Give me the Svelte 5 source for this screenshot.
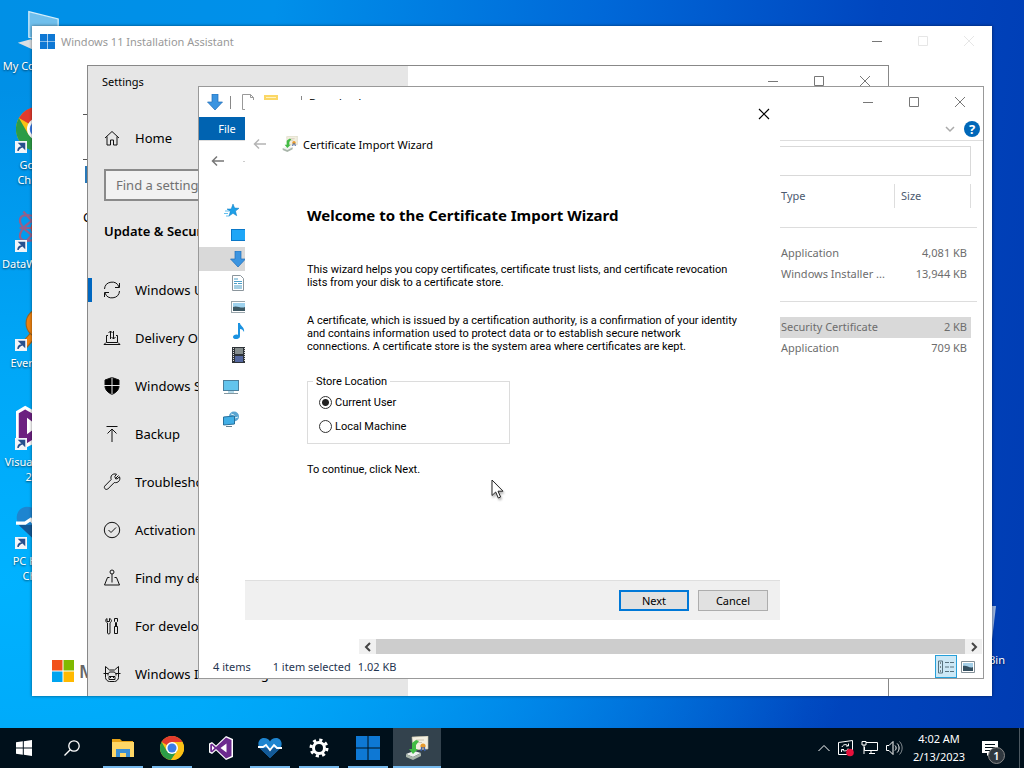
<script>
	let store = $state('user');
	let search = $state('');

	const shortcuts = [
		{ icon: 'computer', label: 'My Computer', link: false },
		{ icon: 'chrome', label: 'Google Chrome', link: true },
		{ icon: 'data', label: 'DataWrangler', link: true },
		{ icon: 'search', label: 'Everything', link: true },
		{ icon: 'installer', label: 'Visual Studio 2022', link: true },
		{ icon: 'health', label: 'PC Health Check', link: true }
	];

	const settings = [
		{ icon: 'sync', label: 'Windows Update', active: true },
		{ icon: 'delivery', label: 'Delivery Optimization' },
		{ icon: 'shield', label: 'Windows Security' },
		{ icon: 'backup', label: 'Backup' },
		{ icon: 'wrench', label: 'Troubleshoot' },
		{ icon: 'check', label: 'Activation' },
		{ icon: 'find', label: 'Find my device' },
		{ icon: 'tools', label: 'For developers' },
		{ icon: 'insider', label: 'Windows Insider Program' }
	];

	const places = ['star', 'desktop', 'download', 'document', 'picture', 'music', 'video'];

	const groups = [
		[
			{ type: 'Application', size: '4,081 KB' },
			{ type: 'Windows Installer ...', size: '13,944 KB' }
		],
		[
			{ type: 'Security Certificate', size: '2 KB', selected: true },
			{ type: 'Application', size: '709 KB' }
		]
	];

	const apps = [
		{ icon: 'folder', name: 'File Explorer', open: true },
		{ icon: 'chrome', name: 'Google Chrome', open: true },
		{ icon: 'studio', name: 'Visual Studio', open: false },
		{ icon: 'health', name: 'PC Health Check', open: true },
		{ icon: 'gear', name: 'Settings', open: true },
		{ icon: 'windows', name: 'Installation Assistant', open: true },
		{ icon: 'cert', name: 'Certificate Import Wizard', open: true, active: true }
	];
</script>

{#snippet controls(kind)}
	<div class="controls {kind}">
		<button aria-label="Minimize"><svg width="10" height="10"><path d="M0 5.5H10" /></svg></button>
		<button aria-label="Maximize"><svg width="10" height="10"><path d="M.5 .5H9.5V9.5H.5Z" /></svg></button>
		<button aria-label="Close"><svg width="10" height="10"><path d="M0 0L10 10M10 0L0 10" /></svg></button>
	</div>
{/snippet}

{#snippet appIcon(name, size)}
	<svg class="app-icon" width={size} height={size} viewBox="0 0 24 24" aria-hidden="true">
		{#if name === 'folder'}
			<path d="M1 3h8l2 2h11v3H1z" fill="#e8a317" />
			<path d="M1 6h22v15H1z" fill="#ffd766" />
			<path d="M5 21v-8h14v8h-4v-4H9v4z" fill="#3b8fd4" />
		{:else if name === 'chrome'}
			<circle cx="12" cy="12" r="12" fill="#fbc116" />
			<path d="M12 12L1.6 6A12 12 0 0 1 22.4 6H12z" fill="#e33b2e" />
			<path d="M1.6 6A12 12 0 0 0 11 24l6.2-9L12 12 6.800 15z" fill="#2c9c47" />
			<path d="M12 6h10.400A12 12 0 0 1 11 24l6.200-9z" fill="#fbc116" />
			<circle cx="12" cy="12" r="6" fill="#fff" />
			<circle cx="12" cy="12" r="4.500" fill="#3a7de8" />
		{:else if name === 'studio'}
			<path d="M17 0l7 3v18l-7 3L7 14.500 3 18l-3-1.500v-9L3 6l4 3.500z" fill="#fff" />
			<path d="M17 1.500l5.500 2.500v16L17 22.500 7 13l-4 3.500-1.800-1V8.500L3 7.500l4 3.500zM17.500 7.500L11.500 12l6 4.500zM3 9.500v5L5.500 12z" fill="#6c2a8e" fill-rule="evenodd" />
		{:else if name === 'installer'}
			<path d="M0 4L5 1l18 10v4L5 24l-5-3z" fill="#fff" />
			<path d="M1.500 5L5 3l16 9-16 10-3.500-2z" fill="#6c2180" />
			<path d="M6 7.500l6 4.500-6 4.500z" fill="#fff" />
		{:else if name === 'health'}
			<path d="M12 22L2 12.500C-1.500 8 1 2 6 2c3 0 5 1.500 6 3.500C13 3.500 15 2 18 2c5 0 7.500 6 4 10.500z" fill="#1e85d0" />
			<path d="M1.500 12h21L12 22z" fill="#135a98" />
			<path d="M0 11h5l3-2 4 5 4-5 3 3h5" fill="none" stroke="#fff" stroke-width="1.800" />
		{:else if name === 'gear'}
			<circle cx="12" cy="12" r="5.500" fill="none" stroke="#fff" stroke-width="3" />
			<circle cx="12" cy="12" r="8" fill="none" stroke="#fff" stroke-width="3" stroke-dasharray="3.100 3.180" />
		{:else if name === 'windows'}
			<path d="M0 0h11.500v11.500H0zM12.500 0H24v11.500H12.500zM0 12.500h11.500V24H0zM12.500 12.500H24V24H12.500z" fill="#0e78d4" />
		{:else if name === 'cert'}
			<path d="M7 1l16-1v13l-15 1z" fill="#f3efe0" stroke="#c5bfa5" stroke-width=".6" />
			<path d="M11 4h8M11 6.500h6" stroke="#ccc5b0" />
			<circle cx="18" cy="10" r="2.600" fill="#e89b2c" />
			<path d="M17 11l-1 4M19 11l1 4" stroke="#3f63ad" stroke-width="1.500" />
			<path d="M1 18l8-3 7 2-8 4z" fill="#f0f2f0" />
			<path d="M1 18l7 3v3l-7-3zM8 21l8-4v3l-8 4z" fill="#a9b5aa" />
			<path d="M11 4L7 7v6H4l4 5 5-5h-2V9l3-4z" fill="#42bb45" />
		{:else if name === 'computer'}
			<path d="M7 2l16 4v13L7 16z" fill="#70bfec" stroke="#d4eefb" stroke-width=".7" />
			<path d="M1 19l7-2 9 3-7 3z" fill="#d9dfe3" />
		{:else if name === 'data'}
			<g fill="none" stroke="#95608a" stroke-width="1.200">
				<ellipse cx="12" cy="12" rx="11" ry="5" transform="rotate(30 12 12)" />
				<ellipse cx="12" cy="12" rx="11" ry="5" transform="rotate(-30 12 12)" />
				<path d="M4 3l16 18M4 21L20 3M2 12h20" />
			</g>
			<circle cx="12" cy="12" r="4" fill="#bd5658" />
		{:else if name === 'search'}
			<path d="M3 21l6-7 3 2-6 7z" fill="#ee8210" stroke="#9b6420" stroke-width=".6" />
			<circle cx="13.500" cy="10" r="8" fill="#ee8210" stroke="#9b6420" stroke-width=".6" />
			<circle cx="14" cy="10" r="4" fill="#fff" />
		{/if}
	</svg>
{/snippet}

{#snippet lineIcon(name)}
	<svg class="line-icon" width="18" height="18" viewBox="0 0 18 18" aria-hidden="true">
		{#if name === 'home'}
			<path d="M2 9l7-6.500L16 9M4 7.500V16h3.500v-5h3v5H14V7.500" />
		{:else if name === 'sync'}
			<path d="M1.500 8A7.500 7.500 0 0 1 16 6M16.500 10A7.500 7.500 0 0 1 2 12M16.500 2v4.500H12M1.500 16v-4.500H6" />
		{:else if name === 'delivery'}
			<path d="M5 6.500H3.500v7h11v-7H13M3 13.500L1 15.500h16l-2-2M7.500 10V2M5.500 4l2-2 2 2M10.500 2v8M8.500 8l2 2 2-2" />
		{:else if name === 'shield'}
			<path class="solid" d="M9 .5l7 2.500v6c0 4-3 6.500-7 8.500-4-2-7-4.500-7-8.500V3z" />
			<path class="cut" d="M9 .5v17M1 8.500h16" />
		{:else if name === 'backup'}
			<path d="M3.500 1.500h11M9 17V4M4.500 8.500L9 4l4.500 4.500" />
		{:else if name === 'wrench'}
			<path d="M15.500 2.500L12.500 5.500 11.800 3.500 13.500 1.200C9.500 0 7 3 8.200 6.500L1.800 13c-1.500 2 1 4.500 3 3l6.500-6.500C15 10.500 18 7 16.500 3.800L14 6l-2-.500" />
		{:else if name === 'check'}
			<circle cx="9" cy="9" r="7.700" />
			<path d="M5.500 9l2.500 2.500L13 6.500" />
		{:else if name === 'find'}
			<circle cx="9" cy="3" r="2" />
			<path d="M9 5v8.500M6.500 8.500H4.500l-3 7.500h15l-3-7.500H11.500" />
		{:else if name === 'tools'}
			<path d="M4 1.500v3h2.500v-3M6.500 1.500c3 1 2 3.500.500 4.500v10c0 1.300-2.500 1.300-2.500 0V6C2.500 5 2 2.500 4 1.500M11.500 1.500h3v3l-1 1v4h-1v-4l-1-1zM11.500 9.500h3v7h-3z" />
		{:else}
			<path d="M2.500 1.500v11c0 2 2 4 4 4h5c2 0 4-2 4-4v-11L11.500 5h-5zM.5 8.500h5l1-1.500h5l1 1.500h5M6 11.500h6v3H6zM5 8.500v2M13 8.500v2M7.500 12v1M10.500 12v1" />
		{/if}
	</svg>
{/snippet}

{#snippet placeIcon(name)}
	<svg width="16" height="16" viewBox="0 0 16 16" aria-hidden="true">
		{#if name === 'star'}
			<path d="M9 1l1.600 4 4.400.300-3.500 2.800 1.200 4.600L9 10.300l-4 2.800L6.300 8.500 3 6h4.200z" fill="#1da0e8" stroke="#0878c0" stroke-width=".5" />
			<path d="M1 8h4M0 10.500h4M2 13h3" stroke="#64c0ef" />
		{:else if name === 'desktop'}
			<rect x="1.500" y="2.500" width="15" height="11" fill="#1ea6f7" stroke="#0a78c8" />
		{:else if name === 'download'}
			<path d="M5 0h6v8h4.500L8 16 .5 8H5z" fill="#3b94e0" stroke="#1f6db8" stroke-width=".7" />
		{:else if name === 'document'}
			<path d="M2.500 .5h8l3 3v12h-11z" fill="#fff" stroke="#8b959c" />
			<path d="M4 4h4M4 6.500h8M4 8.500h3M8 8.500h4M4 11h8M4 13h8" stroke="#4d9fc8" />
		{:else if name === 'picture'}
			<rect x="1.500" y="2.500" width="15" height="11" fill="#fff" stroke="#9aa6ac" />
			<path d="M3 4h12v8H3z" fill="#9ed2ee" />
			<path d="M3 8c4-2 8 2 12 0v4H3z" fill="#3e5964" />
		{:else if name === 'music'}
			<path d="M8 0h2c0 3 5 4 4 9-1-2-2-3-4-3v7c0 4-7 4-7 1 0-2 3-3 5-2z" fill="#1b92e0" />
		{:else if name === 'video'}
			<rect x="2" y="0" width="14" height="16" fill="#2e3338" />
			<path d="M5 1h8v6H5z" fill="#868e8e" />
			<path d="M5 9h8v6H5z" fill="#55689f" />
			<path d="M3.500 1v14M14.500 1v14" stroke="#ddd" stroke-dasharray="1 1" />
		{:else if name === 'pc'}
			<rect x=".5" y="1.500" width="15" height="10" fill="#62c4ed" stroke="#4b7f9c" />
			<path d="M1 14.500h14" stroke="#8397a0" />
			<path d="M5 13h6" stroke="#67b4d4" />
		{:else}
			<circle cx="11" cy="5.500" r="5" fill="#5aa5d2" />
			<path d="M8 3l3 1 1 3 3-1" stroke="#d7eef6" fill="none" />
			<path d="M.5 6l11-1v8l-11 1z" fill="#42afe6" stroke="#28709c" />
			<path d="M3 15.500h6" stroke="#69818e" />
		{/if}
	</svg>
{/snippet}

<div class="page">
	<main class="desktop">
		<div class="shortcuts">
			{#each shortcuts as item}
				<a class="shortcut" href="#desktop">
					<span class="picture">
						{@render appIcon(item.icon, 44)}
						{#if item.link}
							<svg class="link-badge" width="12" height="12">
								<path d="M0 0h12v12H0z" fill="#f2f5f9" />
								<path d="M3 10c0-3 1-4 4-4M4.500 2.500H9.500V7.500z" fill="#27508e" stroke="#27508e" stroke-width="1.500" />
							</svg>
						{/if}
					</span>
					{item.label}
				</a>
			{/each}
		</div>
		<a class="shortcut recycle" href="#bin">
			<svg width="44" height="50" viewBox="0 0 44 50"><path d="M2 4h40l-5 42H7z" fill="#dbe5ee" opacity=".7" /></svg>
			Recycle Bin
		</a>

		<section class="window assistant">
			<header class="titlebar">
				{@render appIcon('windows', 15)}
				<h2>Windows 11 Installation Assistant</h2>
				{@render controls('faded')}
			</header>
			<div class="assistant-body">
				<span class="bar"></span>
				<span class="bar"></span>
				<span class="tile"></span>
				<p>Checking</p>
			</div>
			<footer>
				<svg width="22" height="22">
					<path d="M0 0h10.500v10.500H0z" fill="#f1511b" />
					<path d="M11.500 0H22v10.500H11.500z" fill="#80b900" />
					<path d="M0 11.500h10.500V22H0z" fill="#00a4ef" />
					<path d="M11.500 11.500H22V22H11.500z" fill="#ffb900" />
				</svg>
				<span>Microsoft</span>
			</footer>
		</section>

		<section class="window settings">
			<aside>
				<h2>Settings</h2>
				<nav>
					<a class="entry" href="#home">{@render lineIcon('home')}Home</a>
					<input type="text" placeholder="Find a setting" aria-label="Find a setting" bind:value={search} />
					<h3>Update &amp; Security</h3>
					{#each settings as item}
						<a class="entry" class:active={item.active} href="#{item.icon}">
							{@render lineIcon(item.icon)}{item.label}
						</a>
					{/each}
				</nav>
			</aside>
			<div class="settings-main">{@render controls('grey')}</div>
		</section>

		<section class="window explorer">
			<header class="titlebar">
				{@render placeIcon('download')}
				<span class="divider"></span>
				<svg width="12" height="16"><path d="M.5 .5h8l3 3v12H.500zM8.500 .5v3h3" fill="#fff" stroke="#999" /></svg>
				<svg class="folder" width="14" height="16"><path d="M0 1h14v14H0z" fill="#fbd765" /><path d="M2 3h10v1H2z" fill="#fff3bf" /></svg>
				<span class="divider second"></span>
				<h2>Downloads</h2>
				{@render controls('grey')}
			</header>
			<div class="ribbon">
				<button class="file">File</button>
				<svg class="expand" width="10" height="10"><path d="M1 3l4 4 4-4" fill="none" stroke="#aaa" stroke-width="1.500" /></svg>
				<button class="help" aria-label="Help">?</button>
			</div>
			<div class="address">
				<svg width="14" height="12"><path d="M13 6H1.500M6 1.500L1.500 6 6 10.500" fill="none" stroke="#777" stroke-width="1.500" /></svg>
				<span class="dot"></span>
				<input type="text" aria-label="Search Downloads" />
			</div>
			<div class="explorer-body">
				<nav class="places">
					{#each places as place}
						<a
							href="#{place}"
							aria-label={place}
							class:quick={place === 'star'}
							class:selected={place === 'download'}>{@render placeIcon(place)}</a>
					{/each}
					<a class="root" href="#pc" aria-label="This PC">{@render placeIcon('pc')}</a>
					<a class="root" href="#network" aria-label="Network">{@render placeIcon('network')}</a>
				</nav>
				<div class="files">
					<table>
						<colgroup>
							<col />
							<col class="type" />
							<col class="size" />
							<col class="edge" />
						</colgroup>
						<thead>
							<tr><th></th><th><span>Type</span></th><th><span>Size</span></th><th></th></tr>
						</thead>
						{#each groups as rows}
							<tbody>
								<tr class="group"><td colspan="4"><hr /></td></tr>
								{#each rows as row}
									<tr class:selected={row.selected}>
										<td></td>
										<td>{row.type}</td>
										<td class="number">{row.size}</td>
										<td></td>
									</tr>
								{/each}
							</tbody>
						{/each}
					</table>
					<div class="scrollbar">
						<button aria-label="Scroll left"><svg width="8" height="10"><path d="M6 1L2 5l4 4" /></svg></button>
						<span class="thumb"></span>
						<button aria-label="Scroll right"><svg width="8" height="10"><path d="M2 1l4 4-4 4" /></svg></button>
					</div>
				</div>
			</div>
			<footer class="status">
				<span class="count">4 items</span>
				<span class="picked">1 item selected</span>
				<span>1.02 KB</span>
				<button class="view on" aria-label="Details">
					<svg width="16" height="14"><path d="M.5 1v12h4V1zM7 2.500h4M12 2.500h4M7 7h4M12 7h4M7 11.500h4M12 11.500h4" fill="none" stroke="#58727e" /><path d="M2 3h1M2 7h1M2 11h1" stroke="#222" /></svg>
				</button>
				<button class="view" aria-label="Large icons">
					<svg width="14" height="12"><path d="M.5 .5h13v11H.500z" fill="#fff" stroke="#839098" /><path d="M2 2h10v8H2z" fill="#a4cfe8" /><path d="M2 5c4-1 7 3 10 1v4H2z" fill="#344f60" /></svg>
				</button>
			</footer>
		</section>

		<section class="window wizard">
			<header>
				<button class="close" aria-label="Close"><svg width="12" height="12"><path d="M1 1l10 10M11 1L1 11" stroke="#000" stroke-width="1.200" /></svg></button>
				<div class="wizard-title">
					<button aria-label="Back"><svg width="14" height="12"><path d="M13 6H1.500M6 1.500L1.500 6 6 10.500" fill="none" stroke="#b4b4b4" stroke-width="1.500" /></svg></button>
					{@render appIcon('cert', 16)}
					<span>Certificate Import Wizard</span>
				</div>
			</header>
			<div class="wizard-body">
				<h1>Welcome to the Certificate Import Wizard</h1>
				<p>
					This wizard helps you copy certificates, certificate trust lists, and certificate revocation<br />
					lists from your disk to a certificate store.
				</p>
				<p>
					A certificate, which is issued by a certification authority, is a confirmation of your identity<br />
					and contains information used to protect data or to establish secure network<br />
					connections. A certificate store is the system area where certificates are kept.
				</p>
				<fieldset>
					<legend>Store Location</legend>
					<label><input type="radio" name="store" value="user" bind:group={store} />Current User</label>
					<label><input type="radio" name="store" value="machine" bind:group={store} />Local Machine</label>
				</fieldset>
				<p class="hint">To continue, click Next.</p>
			</div>
			<footer>
				<button class="default">Next</button>
				<button>Cancel</button>
			</footer>
		</section>

		<svg class="cursor" width="14" height="20" viewBox="0 0 14 20">
			<path d="M1 1v15.500l3.700-3.500 2.600 6 2.300-1-2.600-5.800H12z" fill="#fff" stroke="#222" />
		</svg>
	</main>

	<footer class="taskbar">
		<button class="start" aria-label="Start"><svg width="16" height="16"><path d="M0 2.300L6.800 1.300V7.500H0zM7.800 1.200L16 0v7.500H7.800zM0 8.500h6.800v6.200L0 13.700zM7.800 8.500H16V16l-8.200-1.200z" fill="#fff" /></svg></button>
		<button class="start" aria-label="Search"><svg width="16" height="16"><circle cx="10" cy="6" r="5.200" fill="none" stroke="#fff" stroke-width="1.300" /><path d="M6.200 9.800L.5 15.500" stroke="#fff" stroke-width="1.300" /></svg></button>
		<div class="apps">
			{#each apps as app}
				<button class:open={app.open} class:active={app.active} aria-label={app.name}>{@render appIcon(app.icon, 24)}</button>
			{/each}
		</div>
		<div class="tray">
			<svg width="14" height="8"><path d="M1.500 7L7 1.500 12.500 7" /></svg>
			<svg width="18" height="18">
				<path d="M1.500 3.500L15.500 1.500v14h-14zM5 8c1-3 5-3 6-1M11.500 4.500V7H9M11 9.500c-1 3-4.500 3-6 1M4.500 13v-2.500H7" />
				<circle class="alert" cx="13" cy="13.500" r="3.800" />
			</svg>
			<svg width="18" height="16"><path d="M5 2.500h11.500v8H3.500V7M8 13.500h6M10 10.500v3M1 1.500h4V5H1zM3 5v9" /></svg>
			<svg width="18" height="16"><path d="M1.500 5.500h2.500l4-4v13l-4-4H1.500zM10 5.500c1.500 1.500 1.500 3.500 0 5M12.200 3.500c2.500 2.500 2.500 6.500 0 9" /><path d="M14.500 1.500c3.500 3.500 3.500 9.500 0 13" opacity=".5" /></svg>
		</div>
		<time>4:02 AM<br />2/13/2023</time>
		<button class="notices" aria-label="Notifications">
			<svg width="16" height="15"><path d="M0 0h16v12H9l-4 3v-3H0z" fill="#fff" /><path d="M3 3.500h10M3 6.500h10M3 9.500h6" stroke="#001018" /></svg>
			<span class="badge">1</span>
		</button>
		<span class="peek"></span>
	</footer>
</div>

<style>
	:global(body) {
		font-family: 'Noto Sans', 'Open Sans', sans-serif;
		font-size: 11px;
	}

	.page {
		display: flex;
		flex-direction: column;
		min-height: 100vh;
		color: #000;
	}

	.page :is(h1, h2, h3, p) {
		margin: 0;
	}

	.page h2 {
		font-size: 11px;
		font-weight: 400;
	}

	a {
		color: inherit;
		text-decoration: none;
	}

	button {
		align-items: center;
		background: none;
		border: 0;
		color: inherit;
		display: flex;
		font: inherit;
		justify-content: center;
		padding: 0;
	}

	svg {
		display: block;
		flex: none;
	}

	.desktop {
		background:
			radial-gradient(ellipse at 0% 80%, #00b2ff 0%, rgb(0, 178, 255, 0.7) 25%, transparent 60%),
			linear-gradient(96deg, #0090e6 0%, #0090ea 25%, #0068d8 55%, #0046bf 80%, #003cb3 100%);
		flex: 1;
		overflow: hidden;
		position: relative;
	}

	.shortcuts {
		display: flex;
		flex-direction: column;
		width: 76px;
	}

	.shortcut {
		align-items: center;
		box-sizing: border-box;
		color: #fff;
		display: flex;
		flex-direction: column;
		height: 99px;
		line-height: 15px;
		padding-top: 8px;
		text-align: center;
		text-shadow: 0 1px 2px rgb(0, 0, 0, 0.6);
		width: 76px;
	}

	.picture {
		height: 50px;
		position: relative;
	}

	.link-badge {
		bottom: 4px;
		left: -1px;
		position: absolute;
	}

	.recycle {
		bottom: 35px;
		position: absolute;
		right: 10px;
	}

	.window {
		background: #fff;
		box-sizing: border-box;
		display: flex;
		flex-direction: column;
		overflow: hidden;
		position: absolute;
	}

	.titlebar {
		align-items: center;
		display: flex;
		height: 30px;
	}

	.controls {
		display: flex;
		margin-left: auto;
	}

	.controls button {
		height: 30px;
		width: 46px;
	}

	.controls path {
		fill: none;
		stroke: #777;
	}

	.controls.faded button:not(:first-child) path {
		stroke: #e6e6e6;
	}

	.assistant {
		bottom: 32px;
		box-shadow: 0 0 3px rgb(0, 0, 0, 0.5);
		left: 32px;
		right: 32px;
		top: 26px;
	}

	.assistant .titlebar {
		color: #999;
		gap: 6px;
		padding-left: 8px;
	}

	.assistant-body {
		display: flex;
		flex: 1;
		flex-direction: column;
		padding: 58px 0 0 51px;
	}

	.assistant-body p {
		font-size: 13px;
		line-height: 16px;
	}

	.bar {
		background: #555;
		height: 1px;
		margin-bottom: 44px;
		width: 20px;
	}

	.bar + .bar {
		margin-bottom: 6px;
	}

	.tile {
		background: #2878b8;
		height: 17px;
		margin: 0 2px 26px;
		width: 60px;
	}

	.assistant footer {
		align-items: center;
		color: #666;
		display: flex;
		font-size: 18px;
		font-weight: 600;
		gap: 5px;
		height: 50px;
		padding-left: 20px;
	}

	.settings {
		border: 1px solid #888;
		border-bottom: 0;
		bottom: 32px;
		flex-direction: row;
		left: 87px;
		right: 135px;
		top: 65px;
	}

	.settings aside {
		background: #e6e6e6;
		flex: none;
		width: 320px;
	}

	.settings h2 {
		height: 48px;
		line-height: 32px;
		padding-left: 14px;
	}

	.settings-main {
		align-items: flex-start;
		display: flex;
		flex: 1;
	}

	.entry {
		align-items: center;
		display: flex;
		font-size: 13px;
		gap: 14px;
		height: 48px;
		padding-left: 15px;
		position: relative;
	}

	.entry.active::before {
		background: #0067c0;
		content: '';
		height: 24px;
		left: 0;
		position: absolute;
		width: 4px;
	}

	.line-icon {
		fill: none;
		stroke: #111;
	}

	.solid {
		fill: #000;
	}

	.cut {
		stroke: #e6e6e6;
	}

	.settings input {
		background: #f2f2f2;
		border: 2px solid #8a8a8a;
		box-sizing: border-box;
		display: block;
		font: inherit;
		font-size: 13px;
		height: 32px;
		margin: 7px 0 0 16px;
		padding: 0 10px;
		width: 272px;
	}

	.settings input::placeholder {
		color: #717171;
	}

	.settings h3 {
		font-size: 13px;
		font-weight: 600;
		height: 65px;
		line-height: 60px;
		padding-left: 16px;
	}

	.explorer {
		border: 1px solid #999;
		bottom: 49px;
		left: 198px;
		right: 40px;
		top: 86px;
	}

	.explorer .titlebar {
		padding-left: 8px;
	}

	.divider {
		background: #888;
		height: 13px;
		margin: 0 11px 0 7px;
		width: 1px;
	}

	.folder {
		margin-left: 10px;
	}

	.divider.second {
		margin: 0 7px 0 23px;
	}

	.ribbon {
		align-items: center;
		border-bottom: 1px solid #ddd;
		display: flex;
		height: 23px;
	}

	.file {
		background: #0063b1;
		color: #fff;
		height: 23px;
		margin-right: auto;
		width: 56px;
	}

	.help {
		background: #0067b8;
		border-radius: 50%;
		color: #fff;
		font-size: 13px;
		font-weight: 700;
		height: 16px;
		margin: 0 3px 0 9px;
		width: 16px;
	}

	.address {
		align-items: center;
		display: flex;
		padding: 5px 12px 8px;
	}

	.dot {
		background: #ccc;
		height: 1px;
		margin-left: 18px;
		width: 3px;
	}

	.address input {
		border: 1px solid #d9d9d9;
		box-sizing: border-box;
		height: 30px;
		margin-left: auto;
		width: 240px;
	}

	.explorer-body {
		display: flex;
		flex: 1;
		min-height: 0;
	}

	.places {
		padding-top: 15px;
		width: 160px;
	}

	.places a {
		align-items: center;
		display: flex;
		height: 24px;
		padding-left: 31px;
	}

	.places a.quick {
		padding-left: 25px;
	}

	.places a.root {
		height: 32px;
		padding-left: 24px;
	}

	.places .selected {
		background: #d9d9d9;
	}

	.places a:nth-child(7) {
		margin-bottom: 4px;
	}

	.files {
		color: #6d6d6d;
		display: flex;
		flex: 1;
		flex-direction: column;
		justify-content: space-between;
	}

	table {
		border-collapse: collapse;
		table-layout: fixed;
		width: 100%;
	}

	.type {
		width: 120px;
	}

	.size {
		width: 76px;
	}

	.edge {
		width: 12px;
	}

	th {
		color: #4c5a70;
		font-weight: 400;
		height: 27px;
		padding: 0;
		text-align: left;
		vertical-align: top;
	}

	th span {
		border-right: 1px solid #ddd;
		display: block;
		line-height: 24px;
		padding-left: 6px;
	}

	td {
		height: 21px;
		line-height: 19px;
		padding: 0 0 0 6px;
		vertical-align: top;
		white-space: nowrap;
	}

	.number {
		padding: 0 4px 0 0;
		text-align: right;
	}

	.group td {
		height: 32px;
		vertical-align: middle;
	}

	hr {
		background: #ddd;
		border: 0;
		height: 1px;
		margin: 0 6px 0 0;
	}

	tr.selected td:not(:last-child) {
		background: #d9d9d9;
	}

	.scrollbar {
		display: flex;
		height: 15px;
		padding: 0 1px 1px 0;
	}

	.scrollbar button {
		background: #f0f0f0;
		width: 17px;
	}

	.scrollbar path {
		fill: none;
		stroke: #444;
		stroke-width: 2;
	}

	.thumb {
		background: #cdcdcd;
		flex: 1;
	}

	.status {
		align-items: center;
		color: #1f3550;
		display: flex;
		height: 23px;
		padding-left: 14px;
	}

	.count {
		margin-right: 22px;
	}

	.picked {
		margin-right: 7px;
	}

	.view {
		box-sizing: border-box;
		height: 23px;
		width: 22px;
	}

	.view:last-child {
		margin-right: 4px;
	}

	.view.on {
		background: #cce8f6;
		border: 1px solid #26a0da;
		margin-left: auto;
	}

	.wizard {
		bottom: 108px;
		left: 245px;
		right: 244px;
		top: 100px;
	}

	.close {
		height: 28px;
		margin-left: auto;
		width: 32px;
	}

	.wizard-title {
		align-items: center;
		display: flex;
		gap: 5px;
		height: 32px;
		padding-left: 8px;
	}

	.wizard-title button {
		margin-right: 10px;
	}

	.wizard-body {
		flex: 1;
		font-family: Roboto, 'Noto Sans', sans-serif;
		line-height: 13px;
		padding: 44px 44px 0 62px;
	}

	h1 {
		font-family: 'Noto Sans', 'Open Sans', sans-serif;
		font-size: 15px;
		font-weight: 700;
		line-height: 22px;
	}

	.wizard-body p {
		margin-top: 25px;
		white-space: nowrap;
	}

	.wizard-body h1 + p {
		margin-top: 37px;
	}

	fieldset {
		border: 1px solid #dcdcdc;
		box-sizing: border-box;
		height: 69px;
		margin: 22px 0 0;
		padding: 2px 11px 0;
		width: 203px;
	}

	legend {
		margin-left: -6px;
		padding: 0 3px;
	}

	label {
		align-items: center;
		display: flex;
		gap: 3px;
		height: 24px;
	}

	label input {
		appearance: none;
		background: #fff;
		border: 1px solid #333;
		border-radius: 50%;
		box-sizing: border-box;
		height: 13px;
		margin: 0;
		width: 13px;
	}

	label input:checked {
		background: radial-gradient(circle, #222 3px, #fff 4px);
	}

	.wizard-body .hint {
		margin-top: 19px;
	}

	.wizard footer {
		align-items: center;
		background: #f0f0f0;
		border-top: 1px solid #dfdfdf;
		box-sizing: border-box;
		display: flex;
		gap: 9px;
		height: 40px;
		justify-content: flex-end;
		padding-right: 12px;
	}

	.wizard footer button {
		background: #e1e1e1;
		border: 1px solid #adadad;
		box-sizing: border-box;
		height: 21px;
		width: 70px;
	}

	.wizard footer .default {
		border: 2px solid #0078d7;
	}

	.cursor {
		filter: drop-shadow(1px 2px 1px rgb(0, 0, 0, 0.3));
		left: 491px;
		position: absolute;
		top: 479px;
	}

	.taskbar {
		background: #00101b;
		color: #fff;
		display: flex;
		height: 40px;
	}

	.start {
		width: 48px;
	}

	.apps {
		display: flex;
		flex: 1;
		gap: 1px;
		padding-left: 3px;
	}

	.apps button {
		position: relative;
		width: 48px;
	}

	.apps .active {
		background: #33424d;
	}

	.apps .open::after {
		background: #76b9ed;
		bottom: 0;
		content: '';
		height: 2px;
		left: 4px;
		position: absolute;
		right: 4px;
	}

	.apps .active::after {
		left: 0;
		right: 0;
	}

	.tray {
		align-items: center;
		display: flex;
		gap: 6px;
	}

	.tray path {
		fill: none;
		stroke: #fff;
	}

	.alert {
		fill: #e8113c;
	}

	time {
		line-height: 18px;
		padding-top: 2px;
		text-align: center;
		width: 72px;
	}

	.notices {
		margin-right: 14px;
		position: relative;
		width: 30px;
	}

	.badge {
		background: #30383f;
		border: 1px solid #888;
		border-radius: 50%;
		bottom: 4px;
		font-weight: 600;
		height: 15px;
		line-height: 15px;
		position: absolute;
		right: 0;
		width: 15px;
	}

	.peek {
		border-left: 1px solid #4c5860;
		width: 4px;
	}
</style>
